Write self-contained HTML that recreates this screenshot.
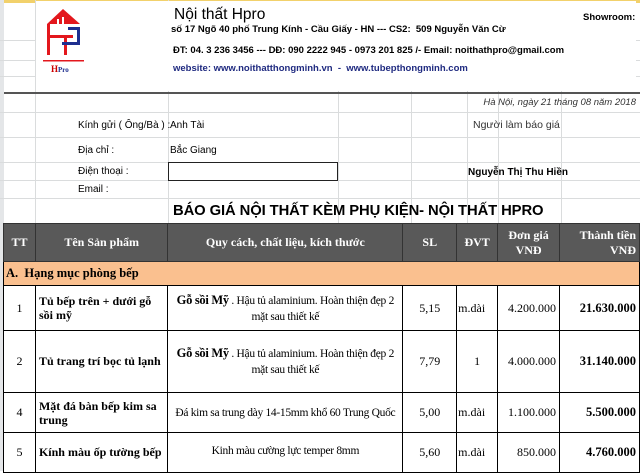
<!DOCTYPE html>
<html><head><meta charset="utf-8"><style>
*{margin:0;padding:0;box-sizing:border-box}
body{width:640px;height:471px;overflow:hidden;background:#fff;position:relative;font-family:"Liberation Sans",Arial,sans-serif;}
.a{position:absolute;white-space:nowrap}
.hl{position:absolute;left:0;width:640px;height:1px;background:#dadcdd}
.vl{position:absolute;top:0;width:1px;background:#dadcdd}
.b{font-weight:bold}
table{position:absolute;left:3px;top:223px;border-collapse:collapse;font-family:"Liberation Serif",serif;font-size:12px;table-layout:fixed}
td{border:1px solid #000;padding:0 3px;color:#000}
.hd td{background:#595959;color:#fff;font-weight:bold;text-align:center;height:38px;border-color:#333}
.q{font-size:11.5px;letter-spacing:-0.3px;text-align:center;line-height:16px;padding:0 1px;white-space:nowrap}
.q b{font-size:12.5px}
</style></head><body>
<div class="a" style="left:0;top:0;width:640px;height:3px;background:#f2d16b"></div>
<div class="a" style="left:0;top:0;width:4px;height:471px;background:#e4e6e8"></div>
<div class="vl" style="left:35px;height:223px"></div>
<div class="vl" style="left:168px;height:223px"></div>
<div class="vl" style="left:338px;top:40px;height:183px"></div>
<div class="vl" style="left:411px;top:40px;height:183px"></div>
<div class="vl" style="left:467px;top:40px;height:183px"></div>
<div class="vl" style="left:498px;top:60px;height:163px"></div>
<div class="vl" style="left:561px;top:40px;height:183px"></div>
<div class="hl" style="top:40px"></div>
<div class="hl" style="top:60px"></div>
<div class="hl" style="top:76px"></div>
<div class="a" style="left:4px;top:92px;width:636px;height:2px;background:#555"></div>
<div class="hl" style="top:112px"></div>
<div class="hl" style="top:137px"></div>
<div class="hl" style="top:162px"></div>
<div class="hl" style="top:180px"></div>
<div class="hl" style="top:198px"></div>
<div class="a" style="left:36px;top:1px;width:600px;height:90px;background:#fff"></div>
<div class="a" style="left:169px;top:40px;width:392px;height:36px;background:#fff"></div>
<svg class="a" style="left:40px;top:6px" width="50" height="70" viewBox="40 6 50 70">
<polygon points="47,24 63,9 80,24" fill="#e3171d"/>
<rect x="57" y="19" width="2" height="5" fill="#fff"/><rect x="62" y="17" width="2" height="7" fill="#fff"/>
<rect x="47" y="24" width="3" height="31" fill="#e3171d"/>
<rect x="47" y="35" width="26" height="3" fill="#e3171d"/>
<rect x="64" y="38" width="3" height="17" fill="#e3171d"/>
<rect x="68" y="27" width="12" height="3" fill="#1f2f8f"/>
<rect x="77" y="27" width="3" height="18" fill="#1f2f8f"/>
<rect x="62" y="42" width="18" height="3" fill="#1f2f8f"/>
<rect x="43" y="60" width="41" height="1.5" fill="#e3171d"/>
<text x="51" y="72" font-family="Liberation Serif" font-weight="bold" font-size="9" fill="#c00">H<tspan font-size="7" fill="#1f2f8f">Pro</tspan></text>
</svg>
<div class="a" style="left:174px;top:6px;font-size:15.5px">Nội thất Hpro</div>
<div class="a b" style="left:171px;top:24px;font-size:9.5px">số 17 Ngõ 40 phố Trung Kính - Cầu Giấy - HN --- CS2:&nbsp; 509 Nguyễn Văn Cừ</div>
<div class="a b" style="left:173px;top:45px;font-size:9.5px">ĐT: 04. 3 236 3456 --- DĐ: 090 2222 945 - 0973 201 825 /- Email: noithathpro@gmail.com</div>
<div class="a b" style="left:173px;top:63px;font-size:9.5px;color:#1f2a80">website: www.noithatthongminh.vn&nbsp; -&nbsp; www.tubepthongminh.com</div>
<div class="a b" style="left:583px;top:12px;font-size:9.5px">Showroom:</div>
<div class="a" style="right:4px;top:97px;font-size:9.5px;font-style:italic;color:#333">Hà Nội, ngày 21 tháng 08 năm 2018</div>
<div class="a" style="left:78px;top:120px;font-size:10px">Kính gửi ( Ông/Bà ) :</div>
<div class="a" style="left:170px;top:120px;font-size:10px">Anh Tài</div>
<div class="a" style="left:473px;top:119px;font-size:10.5px;color:#333">Người làm báo giá</div>
<div class="a" style="left:78px;top:145px;font-size:10px">Địa chỉ :</div>
<div class="a" style="left:170px;top:145px;font-size:10px">Bắc Giang</div>
<div class="a" style="left:78px;top:166px;font-size:10px">Điện thoại :</div>
<div class="a" style="left:168px;top:162px;width:170px;height:19px;border:1px solid #222;background:#fff"></div>
<div class="a b" style="left:468px;top:167px;font-size:10px">Nguyễn Thị Thu Hiền</div>
<div class="a" style="left:78px;top:184px;font-size:10px">Email :</div>
<div class="a b" style="left:173px;top:203px;font-size:14.8px;letter-spacing:-0.1px">BÁO GIÁ NỘI THẤT KÈM PHỤ KIỆN- NỘI THẤT HPRO</div>
<table>
<colgroup><col style="width:32px"><col style="width:133px"><col style="width:235px"><col style="width:54px"><col style="width:41px"><col style="width:62px"><col style="width:80px"></colgroup>
<tr class="hd"><td>TT</td><td>Tên Sản phẩm</td><td>Quy cách, chất liệu, kích thước</td><td>SL</td><td style="padding:0">ĐVT</td><td style="padding:0">Đơn giá<br>VNĐ</td><td style="text-align:right">Thành tiền<br>VNĐ</td></tr>
<tr><td colspan="7" style="background:#fac08f;font-weight:bold;height:24px;padding-left:2px;font-size:12.5px">A.&nbsp; Hạng mục phòng bếp</td></tr>
<tr style="height:45px"><td style="text-align:center">1</td><td class="b" style="line-height:14px">Tủ bếp trên + dưới gỗ sồi mỹ</td><td class="q"><b>Gỗ sồi Mỹ</b> . Hậu tủ alaminium. Hoàn thiện đẹp 2<br>mặt sau thiết kế</td><td style="text-align:center">5,15</td><td style="padding:0 1px">m.dài</td><td style="text-align:right">4.200.000</td><td class="b" style="text-align:right;font-size:12.5px">21.630.000</td></tr>
<tr style="height:62px"><td style="text-align:center">2</td><td class="b">Tủ trang trí bọc tủ lạnh</td><td class="q"><b>Gỗ sồi Mỹ</b> . Hậu tủ alaminium. Hoàn thiện đẹp 2<br>mặt sau thiết kế</td><td style="text-align:center">7,79</td><td style="text-align:center">1</td><td style="text-align:right">4.000.000</td><td class="b" style="text-align:right;font-size:12.5px">31.140.000</td></tr>
<tr style="height:40px"><td style="text-align:center">4</td><td class="b" style="line-height:14px">Mặt đá bàn bếp kim sa trung</td><td class="q">Đá kim sa trung dày 14-15mm khổ 60 Trung Quốc</td><td style="text-align:center">5,00</td><td style="padding:0 1px">m.dài</td><td style="text-align:right">1.100.000</td><td class="b" style="text-align:right;font-size:12.5px">5.500.000</td></tr>
<tr style="height:40px"><td style="text-align:center;vertical-align:top;padding-top:12px">5</td><td class="b" style="vertical-align:top;padding-top:12px">Kính màu ốp tường bếp</td><td class="q" style="vertical-align:top;padding-top:10px">Kinh màu cường lực temper 8mm</td><td style="text-align:center;vertical-align:top;padding-top:12px">5,60</td><td style="padding:12px 1px 0;vertical-align:top">m.dài</td><td style="text-align:right;vertical-align:top;padding-top:12px">850.000</td><td class="b" style="text-align:right;font-size:12.5px;vertical-align:top;padding-top:12px">4.760.000</td></tr>
</table>
</body></html>
